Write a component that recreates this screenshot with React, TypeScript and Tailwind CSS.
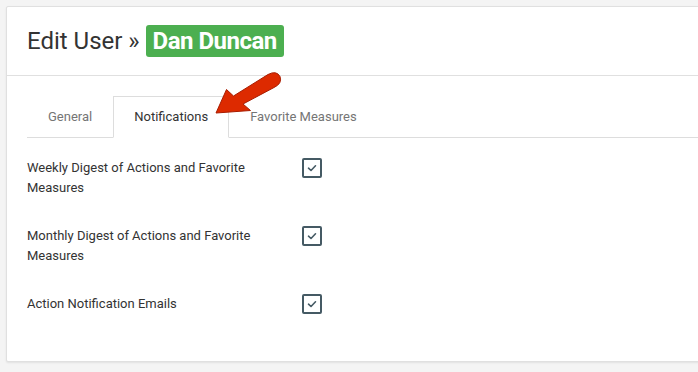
import React from 'react';

const settings = [
  { label: 'Weekly Digest of Actions and Favorite Measures', checked: true },
  { label: 'Monthly Digest of Actions and Favorite Measures', checked: true },
  { label: 'Action Notification Emails', checked: true },
];

const tabs = ['General', 'Notifications', 'Favorite Measures'];

const CheckBox = ({ checked }: { checked: boolean }) => (
  <div className="w-[20px] h-[20px] border-2 border-[#455a64] rounded-[2px] flex items-center justify-center bg-white">
    {checked && (
      <svg width="12" height="12" viewBox="0 0 12 12" fill="none">
        <path d="M2.5 6.2 L5 8.5 L9.5 3.8" stroke="#455a64" strokeWidth="1.6" strokeLinecap="round" strokeLinejoin="round" />
      </svg>
    )}
  </div>
);

const EditUserPage = () => {
  return (
    <div className="relative w-[698px] h-[372px] overflow-hidden bg-[#f4f4f4] pt-[6px] pl-[6px] font-['Roboto',sans-serif]">
      <div className="w-[720px] h-[356px] bg-white border border-[#e0e0e0] rounded-[2px] shadow-[0_1px_2px_rgba(0,0,0,0.08)]">

        {/* header */}
        <div className="px-[20px] py-[18px] border-b border-[#e0e0e0]">
          <h1 className="text-[24px] leading-[32px] text-[#333333] font-normal">
            Edit User »{' '}
            <span className="inline-block px-[7px] leading-[32px] bg-[#4caf50] text-white font-bold tracking-[-0.5px] rounded-[3px]">Dan Duncan</span>
          </h1>
        </div>

        {/* tabs */}
        <div className="pl-[20px] pt-[20px]">
          <div className="flex border-b border-[#dddddd]">
            {tabs.map((t, i) => (
              <div
                key={t}
                className={
                  i === 1
                    ? 'h-[42px] -mb-px px-[20px] leading-[40px] text-[13px] border border-[#dddddd] border-b-white bg-white text-[#333333]'
                    : 'h-[42px] -mb-px px-[20px] leading-[40px] text-[13px] border border-transparent text-[#757575]'
                }
              >
                {t}
              </div>
            ))}
          </div>
        </div>

        {/* notification settings */}
        <div className="px-[20px] pt-[20px] flex flex-col gap-[28px]">
          {settings.map((s) => (
            <div key={s.label} className="flex items-start">
              <div className="w-[275px] text-[13px] leading-[20px] text-[#333333]">{s.label}</div>
              <CheckBox checked={s.checked} />
            </div>
          ))}
        </div>
      </div>

      {/* annotation arrow */}
      <svg className="absolute left-0 top-0 pointer-events-none" width="698" height="372" viewBox="0 0 698 372">
        <path
          d="M216 113 L226.5 89.5 L233.5 96 L268 74.5 Q276.5 70 280 76.5 Q282.5 83.5 274 87.5 L243 104 L250.5 110.5 Z"
          fill="#dd2a00"
          stroke="#a81c00"
          strokeWidth="1"
          strokeLinejoin="round"
        />
      </svg>
    </div>
  );
};

export default EditUserPage;
